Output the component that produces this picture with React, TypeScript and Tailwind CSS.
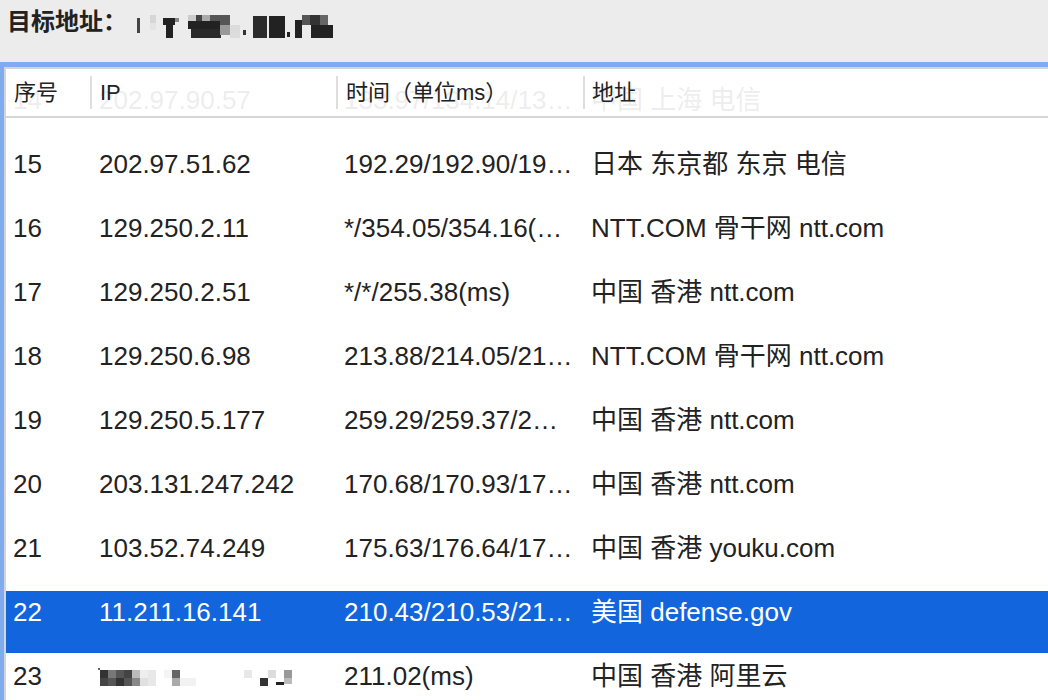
import React from "react";

type Row = { n: string; ip: string; t: string; addr: string; sel?: boolean; blurIp?: boolean };

const rows: Row[] = [
  { n: "14", ip: "202.97.90.57", t: "133.97/134.14/13…", addr: "中国 上海 电信" },
  { n: "15", ip: "202.97.51.62", t: "192.29/192.90/19…", addr: "日本 东京都 东京 电信" },
  { n: "16", ip: "129.250.2.11", t: "*/354.05/354.16(…", addr: "NTT.COM 骨干网 ntt.com" },
  { n: "17", ip: "129.250.2.51", t: "*/*/255.38(ms)", addr: "中国 香港 ntt.com" },
  { n: "18", ip: "129.250.6.98", t: "213.88/214.05/21…", addr: "NTT.COM 骨干网 ntt.com" },
  { n: "19", ip: "129.250.5.177", t: "259.29/259.37/2…", addr: "中国 香港 ntt.com" },
  { n: "20", ip: "203.131.247.242", t: "170.68/170.93/17…", addr: "中国 香港 ntt.com" },
  { n: "21", ip: "103.52.74.249", t: "175.63/176.64/17…", addr: "中国 香港 youku.com" },
  { n: "22", ip: "11.211.16.141", t: "210.43/210.53/21…", addr: "美国 defense.gov", sel: true },
  { n: "23", ip: "", t: "211.02(ms)", addr: "中国 香港 阿里云", blurIp: true },
];

const font = { fontFamily: '"Liberation Sans", "Noto Sans CJK SC", sans-serif' };

type R = [number, number, number, number, string];

function Mosaic({ w, h, b }: { w: number; h: number; b: R[] }) {
  return (
    <svg width={w} height={h} viewBox={`0 0 ${w} ${h}`} className="block">
      {b.map(([x, y, bw, bh, c], i) => (
        <rect key={i} x={x} y={y} width={bw} height={bh} fill={c} />
      ))}
    </svg>
  );
}

const topBlocks: R[] = [
  [2, 8, 3, 15, "#444"],
  [15, 5, 6, 8, "#d6d6d6"],
  [15, 13, 6, 7, "#e4e4e4"],
  [28, 8, 12, 7, "#222"],
  [31, 15, 7, 13, "#222"],
  [40, 8, 4, 4, "#888"],
  [53, 5, 8, 6, "#ccc"],
  [61, 5, 6, 6, "#444"],
  [67, 5, 8, 6, "#aaa"],
  [53, 11, 32, 8, "#222"],
  [56, 19, 30, 9, "#2a2a2a"],
  [75, 5, 10, 6, "#555"],
  [85, 5, 10, 10, "#555"],
  [85, 15, 10, 10, "#999"],
  [95, 15, 10, 13, "#dcdcdc"],
  [108, 20, 3, 5, "#333"],
  [118, 6, 14, 22, "#2b2b2b"],
  [134, 6, 16, 22, "#222"],
  [152, 22, 3, 5, "#222"],
  [160, 10, 7, 18, "#222"],
  [167, 5, 8, 10, "#555"],
  [175, 5, 10, 10, "#333"],
  [185, 5, 8, 10, "#666"],
  [176, 15, 22, 13, "#222"],
];

const rowBlocks: R[] = [
  [0, 5, 2, 2, "#666"],
  [2, 7, 8, 8, "#333"],
  [2, 15, 8, 8, "#444"],
  [10, 7, 8, 8, "#777"],
  [10, 15, 8, 8, "#555"],
  [18, 7, 8, 8, "#555"],
  [18, 15, 8, 8, "#333"],
  [26, 7, 8, 8, "#444"],
  [26, 15, 8, 8, "#555"],
  [34, 7, 8, 8, "#bbb"],
  [34, 15, 8, 8, "#888"],
  [42, 7, 8, 8, "#eee"],
  [42, 15, 8, 8, "#e0e0e0"],
  [50, 7, 8, 16, "#e8e8e8"],
  [66, 7, 8, 8, "#f4f4f4"],
  [74, 7, 8, 8, "#666"],
  [74, 15, 8, 8, "#aaa"],
  [82, 15, 16, 8, "#f2f2f2"],
  [146, 7, 8, 8, "#e8e8e8"],
  [162, 15, 8, 8, "#333"],
  [170, 7, 8, 8, "#ddd"],
  [178, 19, 8, 3, "#222"],
  [186, 7, 8, 8, "#999"],
  [186, 15, 8, 6, "#bbb"],
];

export default function App() {
  return (
    <div className="w-[1048px] h-[700px] overflow-hidden bg-[#ececec] flex flex-col" style={font}>
      <div className="h-[62px] shrink-0 flex items-start pt-[7px] pl-[7px]">
        <span className="text-[24px] leading-[30px] font-bold text-[#222]">目标地址：</span>
        <div className="ml-[8px] mt-[3px]">
          <Mosaic w={200} h={32} b={topBlocks} />
        </div>
      </div>
      <div className="flex-1 border-t-[5px] border-l-[4px] border-[#80abee] min-h-0">
        <div className="h-full border-t-2 border-l-2 border-[#d5d5d5] bg-white relative overflow-hidden">
          <div className="pt-[8px] flex flex-col">
            {rows.map((r) => (
              <div key={r.n} className="h-[64px] pt-[2px] shrink-0">
                <div
                  className={`h-[62px] grid grid-cols-[84px_247px_246px_1fr] text-[26px] leading-[26px] pt-[8px] ${
                    r.sel ? "bg-[#1265dc] text-white" : "text-[#222]"
                  }`}
                >
                  <div className="pl-[7px] whitespace-nowrap">{r.n}</div>
                  <div className="pl-[9px] whitespace-nowrap">
                    {r.blurIp ? (
                      <div className="-ml-[1px]">
                        <Mosaic w={200} h={26} b={rowBlocks} />
                      </div>
                    ) : (
                      r.ip
                    )}
                  </div>
                  <div className="pl-[7px] whitespace-nowrap">{r.t}</div>
                  <div className="pl-[8px] whitespace-nowrap">{r.addr}</div>
                </div>
              </div>
            ))}
          </div>
          <div className="absolute left-0 right-0 top-0 h-[49px] bg-white/[0.92] border-b-2 border-[#d6d6d6] grid grid-cols-[84px_247px_246px_1fr] text-[22px] leading-[26px] text-[#222]">
            <div className="pl-[8px] pt-[11px] whitespace-nowrap">序号</div>
            <div className="flex">
              <div className="w-[2px] bg-[#dedede] mt-[7px] h-[33px]" />
              <div className="pl-[8px] pt-[11px]">IP</div>
            </div>
            <div className="flex -ml-[1px]">
              <div className="w-[2px] bg-[#dedede] mt-[7px] h-[33px]" />
              <div className="pl-[8px] pt-[11px] whitespace-nowrap">时间（单位ms）</div>
            </div>
            <div className="flex">
              <div className="w-[2px] bg-[#dedede] mt-[7px] h-[33px]" />
              <div className="pl-[7px] pt-[11px]">地址</div>
            </div>
          </div>
        </div>
      </div>
    </div>
  );
}
